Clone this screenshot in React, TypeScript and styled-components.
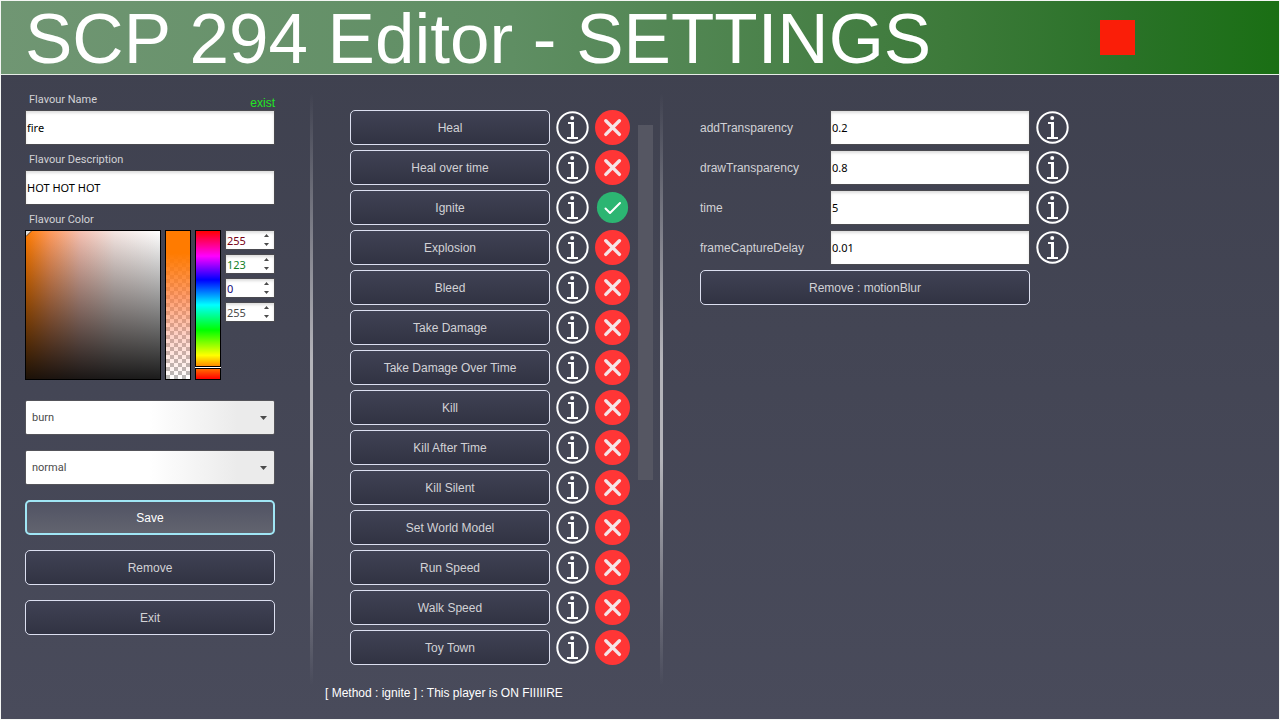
import React from "react";
import styled, { createGlobalStyle, css } from "styled-components";

const GlobalStyle = createGlobalStyle`
  *, *::before, *::after { box-sizing: border-box; }
  body {
    margin: 0;
    font-family: "Liberation Sans", Arial, sans-serif;
    font-size: 12px;
    line-height: 16px;
    color: #d2d2d6;
  }
`;

const labelFont = css`font-family: Roboto, "Noto Sans", sans-serif;`;
const inputFont = css`font-family: "Noto Sans", "DejaVu Sans", sans-serif;`;

const Page = styled.div`
  display: flex;
  flex-direction: column;
  min-height: 100vh;
  border: 1px solid #f4f6f4;
  background: linear-gradient(#3e404e, #494b5b);
`;

const Header = styled.header`
  display: flex;
  align-items: center;
  justify-content: space-between;
  height: 74px;
  padding: 0 144px 0 24px;
  border-bottom: 1px solid #e6ece6;
  background: linear-gradient(90deg, #709673, #5f8e63 40%, #3d7a3a 74%, #2a7228 88%, #1a6f14);
`;

const Title = styled.h1`
  margin: 0;
  padding-top: 2px;
  font-size: 71px;
  font-weight: 400;
  line-height: 72px;
  color: #fff;
  white-space: nowrap;
`;

const Swatch = styled.div`
  width: 35px;
  height: 35px;
  background: #fa1e08;
`;

const Main = styled.main`
  display: flex;
  flex: 1;
  padding: 18px 24px 16px;
`;

const Sidebar = styled.section`
  width: 250px;
  flex: none;
  margin-right: 35px;
`;

const Divider = styled.div`
  flex: none;
  width: 3px;
  height: 592px;
  background: linear-gradient(rgba(255,255,255,0), #b4b4ba 45%, #b4b4ba 62%, rgba(255,255,255,0));
`;

const FieldHead = styled.div`
  ${labelFont}
  display: flex;
  justify-content: space-between;
  height: 17px;
  padding-left: 4px;
  font-size: 11px;
  line-height: 14px;
`;

const Status = styled.output`
  padding-top: 2px;
  font: 12px/16px "Liberation Sans", Arial, sans-serif;
  color: #22e622;
`;

const TextInput = styled.input`
  ${inputFont}
  display: block;
  width: 100%;
  height: 35px;
  padding: 0 1px;
  border: 1px solid #4a4a50;
  background: #fff;
  box-shadow: inset 0 2px 3px #ddd;
  font-size: 11px;
  color: #000;
`;

const Field = styled.div`
  margin-bottom: 8px;
`;

const Picker = styled.div`
  display: flex;
  align-items: flex-start;
  gap: 4px;
  margin-bottom: 20px;
`;

const Shade = styled.div`
  width: 136px;
  height: 150px;
  border: 1px solid #000;
  background:
    linear-gradient(transparent, rgba(8,8,8,0.92)),
    linear-gradient(90deg, #ff7b00, #ff9a5c 18%, #f6c0b0 40%, #f5e6e2 66%, #fff);
`;

const ShadeMark = styled.svg`
  display: block;
`;

const AlphaBar = styled.div`
  width: 26px;
  height: 150px;
  border: 1px solid #000;
  background:
    linear-gradient(#ff7b00 15%, rgba(255,125,60,0.75) 45%, rgba(255,140,110,0.4) 70%, rgba(255,150,130,0)),
    repeating-conic-gradient(#fff 0 25%, #b8b8b8 0 50%) 0 0 / 8px 8px;
`;

const HueBar = styled.div`
  display: flex;
  flex-direction: column;
  justify-content: flex-end;
  width: 26px;
  height: 150px;
  padding-bottom: 10px;
  border: 1px solid #000;
  background: linear-gradient(#f00, #f0f 17%, #00f 33%, #0ff 50%, #0f0 67%, #ff0 84%, #f00);
`;

const HueMark = styled.div`
  height: 3px;
  margin: 0 -1px;
  border: solid #000;
  border-width: 1px 0;
  background: #fff;
`;

const Channels = styled.div`
  display: flex;
  flex-direction: column;
  gap: 4px;
`;

const Channel = styled.div`
  position: relative;
  width: 50px;
`;

const ChannelInput = styled.input<{ $ink: string }>`
  ${inputFont}
  display: block;
  width: 50px;
  height: 20px;
  padding: 0 1px;
  border: 1px solid #4a4a50;
  background: #fff;
  box-shadow: inset 0 2px 3px #ddd;
  font-size: 11px;
  color: ${(p) => p.$ink};
  appearance: textfield;
  &::-webkit-inner-spin-button { display: none; }
`;

const Steppers = styled.div`
  position: absolute;
  top: 1px;
  right: 4px;
  display: flex;
  flex-direction: column;
`;

const Step = styled.button`
  display: flex;
  align-items: center;
  justify-content: center;
  width: 9px;
  height: 9px;
  padding: 0;
  border: 0;
  background: none;
`;

const SelectWrap = styled.div`
  position: relative;
  margin-bottom: 15px;
`;

const Select = styled.select`
  ${labelFont}
  display: block;
  width: 100%;
  height: 35px;
  padding: 0 6px;
  border: 1px solid #54545a;
  border-radius: 2px;
  appearance: none;
  background: linear-gradient(90deg, #fff 50%, #ebebeb 85%);
  font-size: 11px;
  color: #4b4b4b;
`;

const SelectArrow = styled.svg`
  position: absolute;
  top: 16px;
  right: 8px;
  pointer-events: none;
`;

const Button = styled.button<{ $width: string; $active?: boolean }>`
  display: block;
  width: ${(p) => p.$width};
  height: 35px;
  padding: 0;
  border: ${(p) => (p.$active ? "2px solid #a0e6f5" : "1px solid #dcdff0")};
  border-radius: 5px;
  background: ${(p) => (p.$active ? "linear-gradient(#515364, #62646f)" : "linear-gradient(#404254, #313343)")};
  font: 12px/16px "Liberation Sans", Arial, sans-serif;
  color: ${(p) => (p.$active ? "#fff" : "#d2d2d6")};
`;

const Actions = styled.div`
  display: flex;
  flex-direction: column;
  gap: 15px;
`;

const Methods = styled.section`
  width: 347px;
  flex: none;
  padding: 17px 7px 0 12px;
`;

const MethodArea = styled.div`
  display: flex;
  justify-content: space-between;
  padding-left: 25px;
`;

const Rows = styled.div`
  display: flex;
  flex-direction: column;
  gap: 5px;
`;

const Row = styled.div`
  display: flex;
  align-items: center;
  height: 35px;
`;

const IconButton = styled.button`
  display: flex;
  align-items: center;
  justify-content: center;
  width: 35px;
  height: 35px;
  margin-left: 5px;
  padding: 0;
  border: 0;
  background: none;
`;

const ScrollThumb = styled.div`
  width: 15px;
  height: 355px;
  margin-top: 15px;
  background: #555662;
`;

const Message = styled.p`
  margin: 20px 0 0;
  color: #fff;
  white-space: nowrap;
`;

const Params = styled.section`
  flex: 1;
  padding: 17px 0 0 37px;
`;

const ParamLabel = styled.label`
  width: 130px;
`;

const ParamBox = styled.div`
  width: 200px;
`;

const InfoIcon = () => (
  <svg width="35" height="35" viewBox="0 0 35 35" aria-hidden="true">
    <circle cx="17.5" cy="17.5" r="15.2" fill="none" stroke="#fff" strokeWidth="2" />
    <circle cx="17.2" cy="8" r="2" fill="#fff" />
    <path d="M13 12h6v15h4v2H12v-2h4V14h-3z" fill="#fff" />
  </svg>
);

const CrossIcon = () => (
  <svg width="35" height="35" viewBox="0 0 35 35" aria-hidden="true">
    <circle cx="17.5" cy="17.5" r="17.5" fill="#ff3636" />
    <path d="M10.8 10.8l13.6 13.6M24.4 10.8l-13.6 13.6" stroke="#f4e4e6" strokeWidth="3.4" strokeLinecap="round" />
  </svg>
);

const CheckIcon = () => (
  <svg width="35" height="35" viewBox="0 0 35 35" aria-hidden="true">
    <circle cx="17.5" cy="17.5" r="15.6" fill="#2cb572" />
    <path d="M10.5 18.5l4.5 4.5L25 13" fill="none" stroke="#fff" strokeWidth="2" strokeLinecap="round" strokeLinejoin="round" />
  </svg>
);

const METHODS = [
  "Heal", "Heal over time", "Ignite", "Explosion", "Bleed", "Take Damage", "Take Damage Over Time",
  "Kill", "Kill After Time", "Kill Silent", "Set World Model", "Run Speed", "Walk Speed", "Toy Town",
];

const PARAMS = [
  ["addTransparency", "0.2"],
  ["drawTransparency", "0.8"],
  ["time", "5"],
  ["frameCaptureDelay", "0.01"],
];

const CHANNELS = [
  ["Red", "255", "#780014"],
  ["Green", "123", "#148228"],
  ["Blue", "0", "#140a78"],
  ["Alpha", "255", "#4b4b4b"],
];

const Dropdown = ({ label, value }: { label: string; value: string }) => (
  <SelectWrap>
    <Select aria-label={label} defaultValue={value}>
      <option>{value}</option>
    </Select>
    <SelectArrow width="7" height="4" viewBox="0 0 7 4" aria-hidden="true">
      <path d="M0 0h7L3.5 4z" fill="#4b4b4b" />
    </SelectArrow>
  </SelectWrap>
);

export default function App() {
  return (
    <Page>
      <GlobalStyle />
      <Header>
        <Title>SCP 294 Editor - SETTINGS</Title>
        <Swatch />
      </Header>
      <Main>
        <Sidebar>
          <Field>
            <FieldHead>
              <label htmlFor="name">Flavour Name</label>
              <Status>exist</Status>
            </FieldHead>
            <TextInput id="name" defaultValue="fire" />
          </Field>
          <Field>
            <FieldHead>
              <label htmlFor="description">Flavour Description</label>
            </FieldHead>
            <TextInput id="description" defaultValue="HOT HOT HOT" />
          </Field>
          <FieldHead>Flavour Color</FieldHead>
          <Picker>
            <Shade>
              <ShadeMark width="6" height="6" viewBox="0 0 6 6" aria-hidden="true">
                <path d="M0 0h5L0 5z" fill="#ddd" />
                <path d="M5.5 0L0 5.5" stroke="#555" />
              </ShadeMark>
            </Shade>
            <AlphaBar />
            <HueBar>
              <HueMark />
            </HueBar>
            <Channels>
              {CHANNELS.map(([name, value, ink]) => (
                <Channel key={name}>
                  <ChannelInput type="number" aria-label={name} defaultValue={value} $ink={ink} />
                  <Steppers>
                    <Step aria-label={`Increase ${name}`}>
                      <svg width="5" height="3" viewBox="0 0 5 3"><path d="M0 3h5L2.5 0z" fill="#4b4b4b" /></svg>
                    </Step>
                    <Step aria-label={`Decrease ${name}`}>
                      <svg width="5" height="3" viewBox="0 0 5 3"><path d="M0 0h5L2.5 3z" fill="#4b4b4b" /></svg>
                    </Step>
                  </Steppers>
                </Channel>
              ))}
            </Channels>
          </Picker>
          <Dropdown label="Sound" value="burn" />
          <Dropdown label="Type" value="normal" />
          <Actions>
            <Button $width="100%" $active>Save</Button>
            <Button $width="100%">Remove</Button>
            <Button $width="100%">Exit</Button>
          </Actions>
        </Sidebar>
        <Divider />
        <Methods>
          <MethodArea>
            <Rows>
              {METHODS.map((name) => (
                <Row key={name}>
                  <Button $width="200px">{name}</Button>
                  <IconButton aria-label={`About ${name}`}><InfoIcon /></IconButton>
                  <IconButton aria-label={`Toggle ${name}`}>
                    {name === "Ignite" ? <CheckIcon /> : <CrossIcon />}
                  </IconButton>
                </Row>
              ))}
            </Rows>
            <ScrollThumb />
          </MethodArea>
          <Message>[ Method : ignite ] : This player is ON FIIIIIRE</Message>
        </Methods>
        <Divider />
        <Params>
          <Rows>
            {PARAMS.map(([name, value]) => (
              <Row key={name}>
                <ParamLabel htmlFor={name}>{name}</ParamLabel>
                <ParamBox><TextInput id={name} defaultValue={value} /></ParamBox>
                <IconButton aria-label={`About ${name}`}><InfoIcon /></IconButton>
              </Row>
            ))}
            <Button $width="330px">Remove : motionBlur</Button>
          </Rows>
        </Params>
      </Main>
    </Page>
  );
}
